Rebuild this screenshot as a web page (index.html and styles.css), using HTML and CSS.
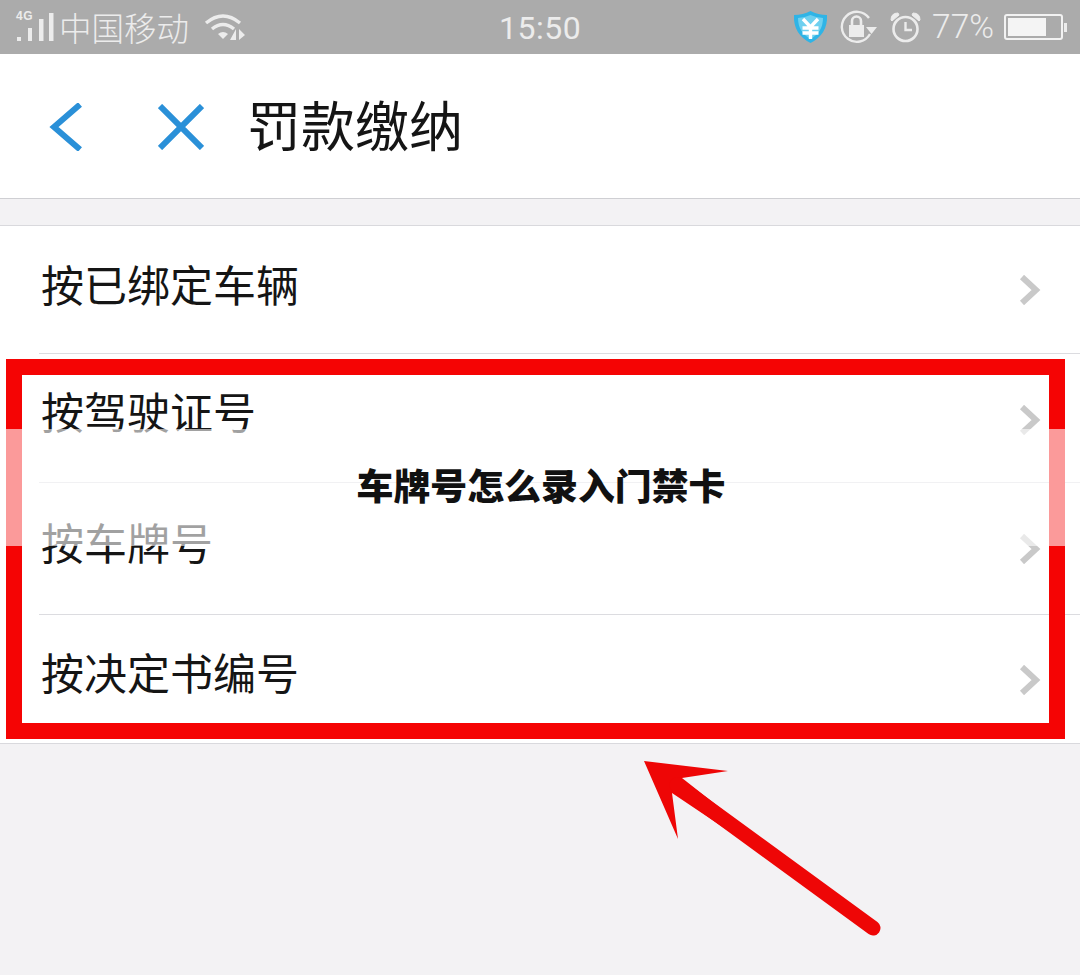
FILE: index.html
```html
<!DOCTYPE html>
<html lang="zh">
<head>
<meta charset="utf-8">
<title>车牌号怎么录入门禁卡</title>
<link rel="stylesheet" href="styles.css">
</head>
<body>
<div class="page">
  <header class="status">
    <div class="status-left">
      <span class="net">
        <span class="net-label">4G</span>
        <svg class="signal" width="41" height="31" viewBox="0 0 41 31"><g fill="#ececec"><rect x="2" y="24" width="4" height="4"/><rect x="13" y="15" width="4" height="13"/><rect x="24" y="6" width="4.500" height="22"/><rect x="34" y="0" width="4.500" height="28"/></g></svg>
      </span>
      <span class="carrier">中国移动</span>
      <svg class="wifi" width="44" height="30" viewBox="0 0 44 30"><g fill="none" stroke="#ececec" stroke-width="3.400"><path d="M2 11 Q19 -3 36 11"/><path d="M8 17 Q19 8 30 17"/></g><path d="M14 22 Q19 18 24 22 L19 27Z" fill="#ececec"/><path d="M32 17 V28 H26Z M35 17 L41 23 L35 28Z" fill="#ececec"/></svg>
    </div>
    <div class="time">15:50</div>
    <div class="status-right">
      <svg width="35" height="34" viewBox="0 0 35 34"><path d="M17.500 1 Q25 5 34 5 Q35 24 17.500 33 Q0 24 1 5 Q10 5 17.500 1Z" fill="#2fb4e6"/><path d="M17.500 5 Q24 8 30 8 Q30 22 17.500 29 Q5 22 5 8 Q11 8 17.500 5Z" fill="#6fd0ef"/><path d="M10 9 L17.500 17 L25 9 M9.500 18 H25.500 M9.500 23 H25.500 M17.500 16 V29" fill="none" stroke="#fff" stroke-width="3.400"/></svg>
      <svg class="lock" width="39" height="34" viewBox="0 0 39 34"><path d="M30 8 A15 15 0 1 0 31 24" fill="none" stroke="#ececec" stroke-width="2.400"/><path d="M13 15 V11 A4.500 4.500 0 0 1 22 11 V15" fill="none" stroke="#ececec" stroke-width="2.600"/><rect x="10" y="15" width="15" height="12" fill="#ececec"/><path d="M27 17 H38 L32.500 24Z" fill="#ececec"/></svg>
      <svg class="alarm" width="33" height="32" viewBox="0 0 33 32"><circle cx="16.500" cy="18" r="12" fill="none" stroke="#ececec" stroke-width="2.600"/><path d="M16.500 11 V19 H23" fill="none" stroke="#ececec" stroke-width="2.400"/><path d="M2 9 Q2 2 9 2 L10 4 L3 10Z M31 9 Q31 2 24 2 L23 4 L30 10Z" fill="#ececec" stroke="#ececec"/></svg>
      <span class="percent">77%</span>
      <span class="battery"><span class="battery-fill"></span></span>
    </div>
  </header>

  <nav class="nav">
    <svg class="back" width="34" height="48" viewBox="0 0 34 48"><path d="M31 1.500 L5 24 L31 46.500" fill="none" stroke="#2a90d8" stroke-width="6"/></svg>
    <svg class="close" width="46" height="46" viewBox="0 0 46 46"><path d="M2 2 L44 44 M44 2 L2 44" fill="none" stroke="#2a90d8" stroke-width="6"/></svg>
    <h1 class="title">罚款缴纳</h1>
  </nav>

  <div class="gap"></div>

  <ul class="list">
    <li class="row row-a"><span class="label">按已绑定车辆</span><svg class="chev" width="22" height="30" viewBox="0 0 22 30"><path d="M3 2 L17 15 L3 28" fill="none" stroke="#c9c9c9" stroke-width="6"/></svg></li>
    <li class="row row-b"><span class="label">按驾驶证号</span><svg class="chev" width="22" height="30" viewBox="0 0 22 30"><path d="M3 2 L17 15 L3 28" fill="none" stroke="#c9c9c9" stroke-width="6"/></svg></li>
    <li class="row row-c"><span class="label">按车牌号</span><svg class="chev" width="22" height="30" viewBox="0 0 22 30"><path d="M3 2 L17 15 L3 28" fill="none" stroke="#c9c9c9" stroke-width="6"/></svg></li>
    <li class="row row-d"><span class="label">按决定书编号</span><svg class="chev" width="22" height="30" viewBox="0 0 22 30"><path d="M3 2 L17 15 L3 28" fill="none" stroke="#c9c9c9" stroke-width="6"/></svg></li>
  </ul>

  <div class="frame"></div>
  <svg class="arrow" width="1080" height="975" viewBox="0 0 1080 975"><path d="M644 761 L728 771 L682 778 L873 928 L672 793 L678 839Z" fill="#ee0606"/><path d="M677 785 L873 928" stroke="#ee0606" stroke-width="15" stroke-linecap="round"/></svg>
  <div class="band"><span class="band-text">车牌号怎么录入门禁卡</span></div>
</div>
</body>
</html>
```

FILE: styles.css
```css
* { box-sizing: border-box; }
html, body { margin: 0; padding: 0; }
body { background: #f3f2f4; font-family: "Noto Sans CJK SC", "Noto Sans", sans-serif; }
.page { position: relative; width: 1080px; height: 975px; overflow: hidden; background: #f3f2f4; }

.status { height: 54px; background: #ababab; color: #ececec; display: flex; align-items: center; justify-content: space-between; padding: 0 17px 0 15px; position: relative; }
.status-left { display: flex; align-items: center; }
.net { position: relative; width: 45px; height: 31px; display: block; }
.net-label { position: absolute; left: 1px; top: -3px; font: 700 12px/14px "Liberation Sans", sans-serif; letter-spacing: .5px; }
.signal { position: absolute; left: 0; top: 1px; }
.carrier { font-size: 32.500px; font-weight: 300; line-height: 54px; margin-left: -1px; }
.wifi { margin-left: 15px; }
.time { position: absolute; left: 499px; top: 0; font: 400 32px/56px Roboto, sans-serif; letter-spacing: .5px; }
.status-right { display: flex; align-items: center; gap: 10px; }
.lock { margin-left: 1px; }
.alarm { margin-left: 1px; }
.percent { font: 300 33.500px/54px Roboto, sans-serif; }
.battery { width: 59px; height: 26px; border: 2px solid #f2f2f2; border-radius: 3px; padding: 2px; position: relative; display: block; }
.battery::after { content: ""; position: absolute; right: -6px; top: 7px; width: 3px; height: 9px; background: #ececec; }
.battery-fill { display: block; width: 38px; height: 100%; background: #f4f4f4; }

.nav { height: 145px; background: #fff; border-bottom: 1px solid #cfcfd3; display: flex; align-items: center; padding-left: 49px; }
.back { margin-top: 1px; }
.close { margin-left: 75px; margin-top: 1px; }
.title { margin: 0 0 4px 43px; font-size: 54px; font-weight: 400; color: #151515; line-height: 60px; }

.gap { height: 26px; background: #f3f2f4; }

.list { list-style: none; margin: 0; padding: 0; background: #fff; border-top: 1px solid #d9d9dd; border-bottom: 1px solid #d9d9dd; }
.row { display: flex; align-items: center; justify-content: space-between; padding: 0 39px 0 41px; font-size: 43px; font-weight: 400; color: #151515; position: relative; }
.row + .row::before { content: ""; position: absolute; top: -1px; left: 39px; right: 0; height: 1px; background: #dcdce0; }
.chev { display: block; }
.row-a { height: 128px; }
.row-a .label { margin-bottom: 14px; }
.row-b { height: 129px; }
.row-b .label { margin-bottom: 17px; }
.row-b .chev { margin-top: 3px; }
.row-c { height: 132px; }
.row-c .label { margin-bottom: 16px; }
.row-d { height: 128px; }
.row-d .label { margin-bottom: 16px; }
.row-d .chev { margin-top: 2px; }

.frame { position: absolute; left: 6px; top: 359px; width: 1059px; height: 380px; border: 16px solid #f50404; }
.arrow { position: absolute; left: 0; top: 0; }
.band { position: absolute; left: 0; top: 429px; width: 1080px; height: 117px; background: rgba(255, 255, 255, .6); display: flex; align-items: center; justify-content: center; }
.band-text { font-size: 36.900px; font-weight: 900; color: #111; line-height: 46px; margin-top: -7px; margin-left: 2px; white-space: nowrap; }
```
